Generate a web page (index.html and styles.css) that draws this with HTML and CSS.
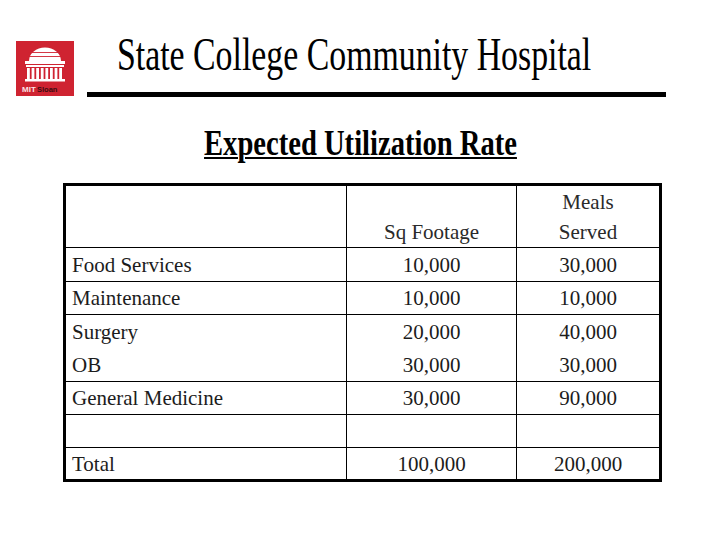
FILE: index.html
```html
<!DOCTYPE html>
<html>
<head>
<meta charset="utf-8">
<link rel="stylesheet" href="styles.css">
</head>
<body>
<div class="slide">
  <header class="header">
    <svg class="logo" viewBox="0 0 58 55" aria-label="MIT Sloan">
      <rect width="58" height="55" fill="#cf2331"/>
      <path d="M13 20 A16 13.5 0 0 1 45 20 Z" fill="#fff"/>
      <g stroke="#cf2331" stroke-width="0.9">
        <line x1="12" y1="11.5" x2="46" y2="11.5"/>
        <line x1="12" y1="15.5" x2="46" y2="15.5"/>
      </g>
      <rect x="9" y="20" width="40" height="3" fill="#fff"/>
      <rect x="10" y="24" width="38" height="2" fill="#fff"/>
      <g fill="#fff">
        <rect x="11" y="27" width="2.8" height="11"/>
        <rect x="15.6" y="27" width="2.8" height="11"/>
        <rect x="20.2" y="27" width="2.8" height="11"/>
        <rect x="24.8" y="27" width="2.8" height="11"/>
        <rect x="29.4" y="27" width="2.8" height="11"/>
        <rect x="34" y="27" width="2.8" height="11"/>
        <rect x="38.6" y="27" width="2.8" height="11"/>
        <rect x="43.2" y="27" width="2.8" height="11"/>
      </g>
      <rect x="9" y="38" width="40" height="2.5" fill="#fff"/>
      <text x="6" y="51" class="logo-mit">MIT</text>
      <text x="21" y="51" class="logo-sloan">Sloan</text>
    </svg>
    <div class="head-main">
      <h1 class="title"><span>State College Community Hospital</span></h1>
      <div class="rule"></div>
    </div>
  </header>

  <h2 class="subtitle"><span>Expected Utilization Rate</span></h2>

  <table class="data">
    <colgroup>
      <col class="c1">
      <col class="c2">
      <col class="c3">
    </colgroup>
    <tr class="r-head">
      <td></td>
      <td class="hd">Sq Footage</td>
      <td class="hd">Meals<br>Served</td>
    </tr>
    <tr class="r34">
      <td>Food Services</td>
      <td class="num">10,000</td>
      <td class="num">30,000</td>
    </tr>
    <tr class="r33">
      <td>Maintenance</td>
      <td class="num">10,000</td>
      <td class="num">10,000</td>
    </tr>
    <tr class="r33 nb">
      <td>Surgery</td>
      <td class="num">20,000</td>
      <td class="num">40,000</td>
    </tr>
    <tr class="r34">
      <td>OB</td>
      <td class="num">30,000</td>
      <td class="num">30,000</td>
    </tr>
    <tr class="r33">
      <td>General Medicine</td>
      <td class="num">30,000</td>
      <td class="num">90,000</td>
    </tr>
    <tr class="r33">
      <td></td>
      <td class="num"></td>
      <td class="num"></td>
    </tr>
    <tr class="r31 nb">
      <td>Total</td>
      <td class="num">100,000</td>
      <td class="num">200,000</td>
    </tr>
  </table>
</div>
</body>
</html>
```

FILE: styles.css
```css
* {
  box-sizing: border-box;
}

html,
body {
  margin: 0;
  padding: 0;
  background: #fff;
}

body {
  width: 720px;
  height: 540px;
  overflow: hidden;
  font-family: "Liberation Serif", "Times New Roman", serif;
  color: #000;
}

.header {
  display: grid;
  grid-template-columns: 58px minmax(0, 1fr);
  column-gap: 13px;
  align-items: start;
  padding: 32px 54px 0 16px;
}

.logo {
  display: block;
  width: 58px;
  height: 55px;
  margin-top: 9px;
}

.logo-mit {
  font-family: "Liberation Sans", Arial, sans-serif;
  font-weight: bold;
  font-size: 8px;
  fill: #fbe3e5;
}

.logo-sloan {
  font-family: "Liberation Sans", Arial, sans-serif;
  font-weight: bold;
  font-size: 7.5px;
  fill: #3a0c0f;
}

.head-main {
  min-width: 0;
}

.title {
  margin: 0;
  padding-left: 30px;
  font-size: 46px;
  font-weight: normal;
  line-height: 46px;
  white-space: nowrap;
}

.title span {
  display: inline-block;
  margin-right: -172px;
  transform: scaleX(0.735);
  transform-origin: 0 50%;
}

.rule {
  height: 5px;
  margin-top: 14px;
  background: #000;
}

.subtitle {
  margin: 29px 0 0;
  text-align: center;
  font-size: 35px;
  font-weight: bold;
  line-height: 35px;
  white-space: nowrap;
}

.subtitle span {
  display: inline-block;
  transform: scaleX(0.817);
  transform-origin: 50% 50%;
  text-decoration: underline;
  text-decoration-thickness: 2px;
  text-underline-offset: 2px;
}

.data {
  margin: 22px 0 0 63px;
  width: 599px;
  table-layout: fixed;
  border: 3px solid #000;
  border-collapse: separate;
  border-spacing: 0;
  font-size: 21px;
  color: #1c1c1c;
}

.c1 { width: 281px; }
.c2 { width: 170px; }
.c3 { width: 142px; }

.data td {
  padding: 0 0 0 6px;
  border-right: 1px solid #000;
  border-bottom: 1px solid #000;
  vertical-align: middle;
  white-space: nowrap;
  line-height: 24px;
}

.data td:last-child {
  border-right: none;
}

.data tr.nb td {
  border-bottom: none;
}

.data td.num,
.data td.hd {
  padding: 0;
  text-align: center;
}

.r-head td {
  height: 62px;
}

.data td.hd {
  vertical-align: bottom;
  line-height: 30px;
  color: #2a2a2a;
}

.r34 td { height: 34px; }
.r33 td { height: 33px; }
.r31 td { height: 31px; }
```
